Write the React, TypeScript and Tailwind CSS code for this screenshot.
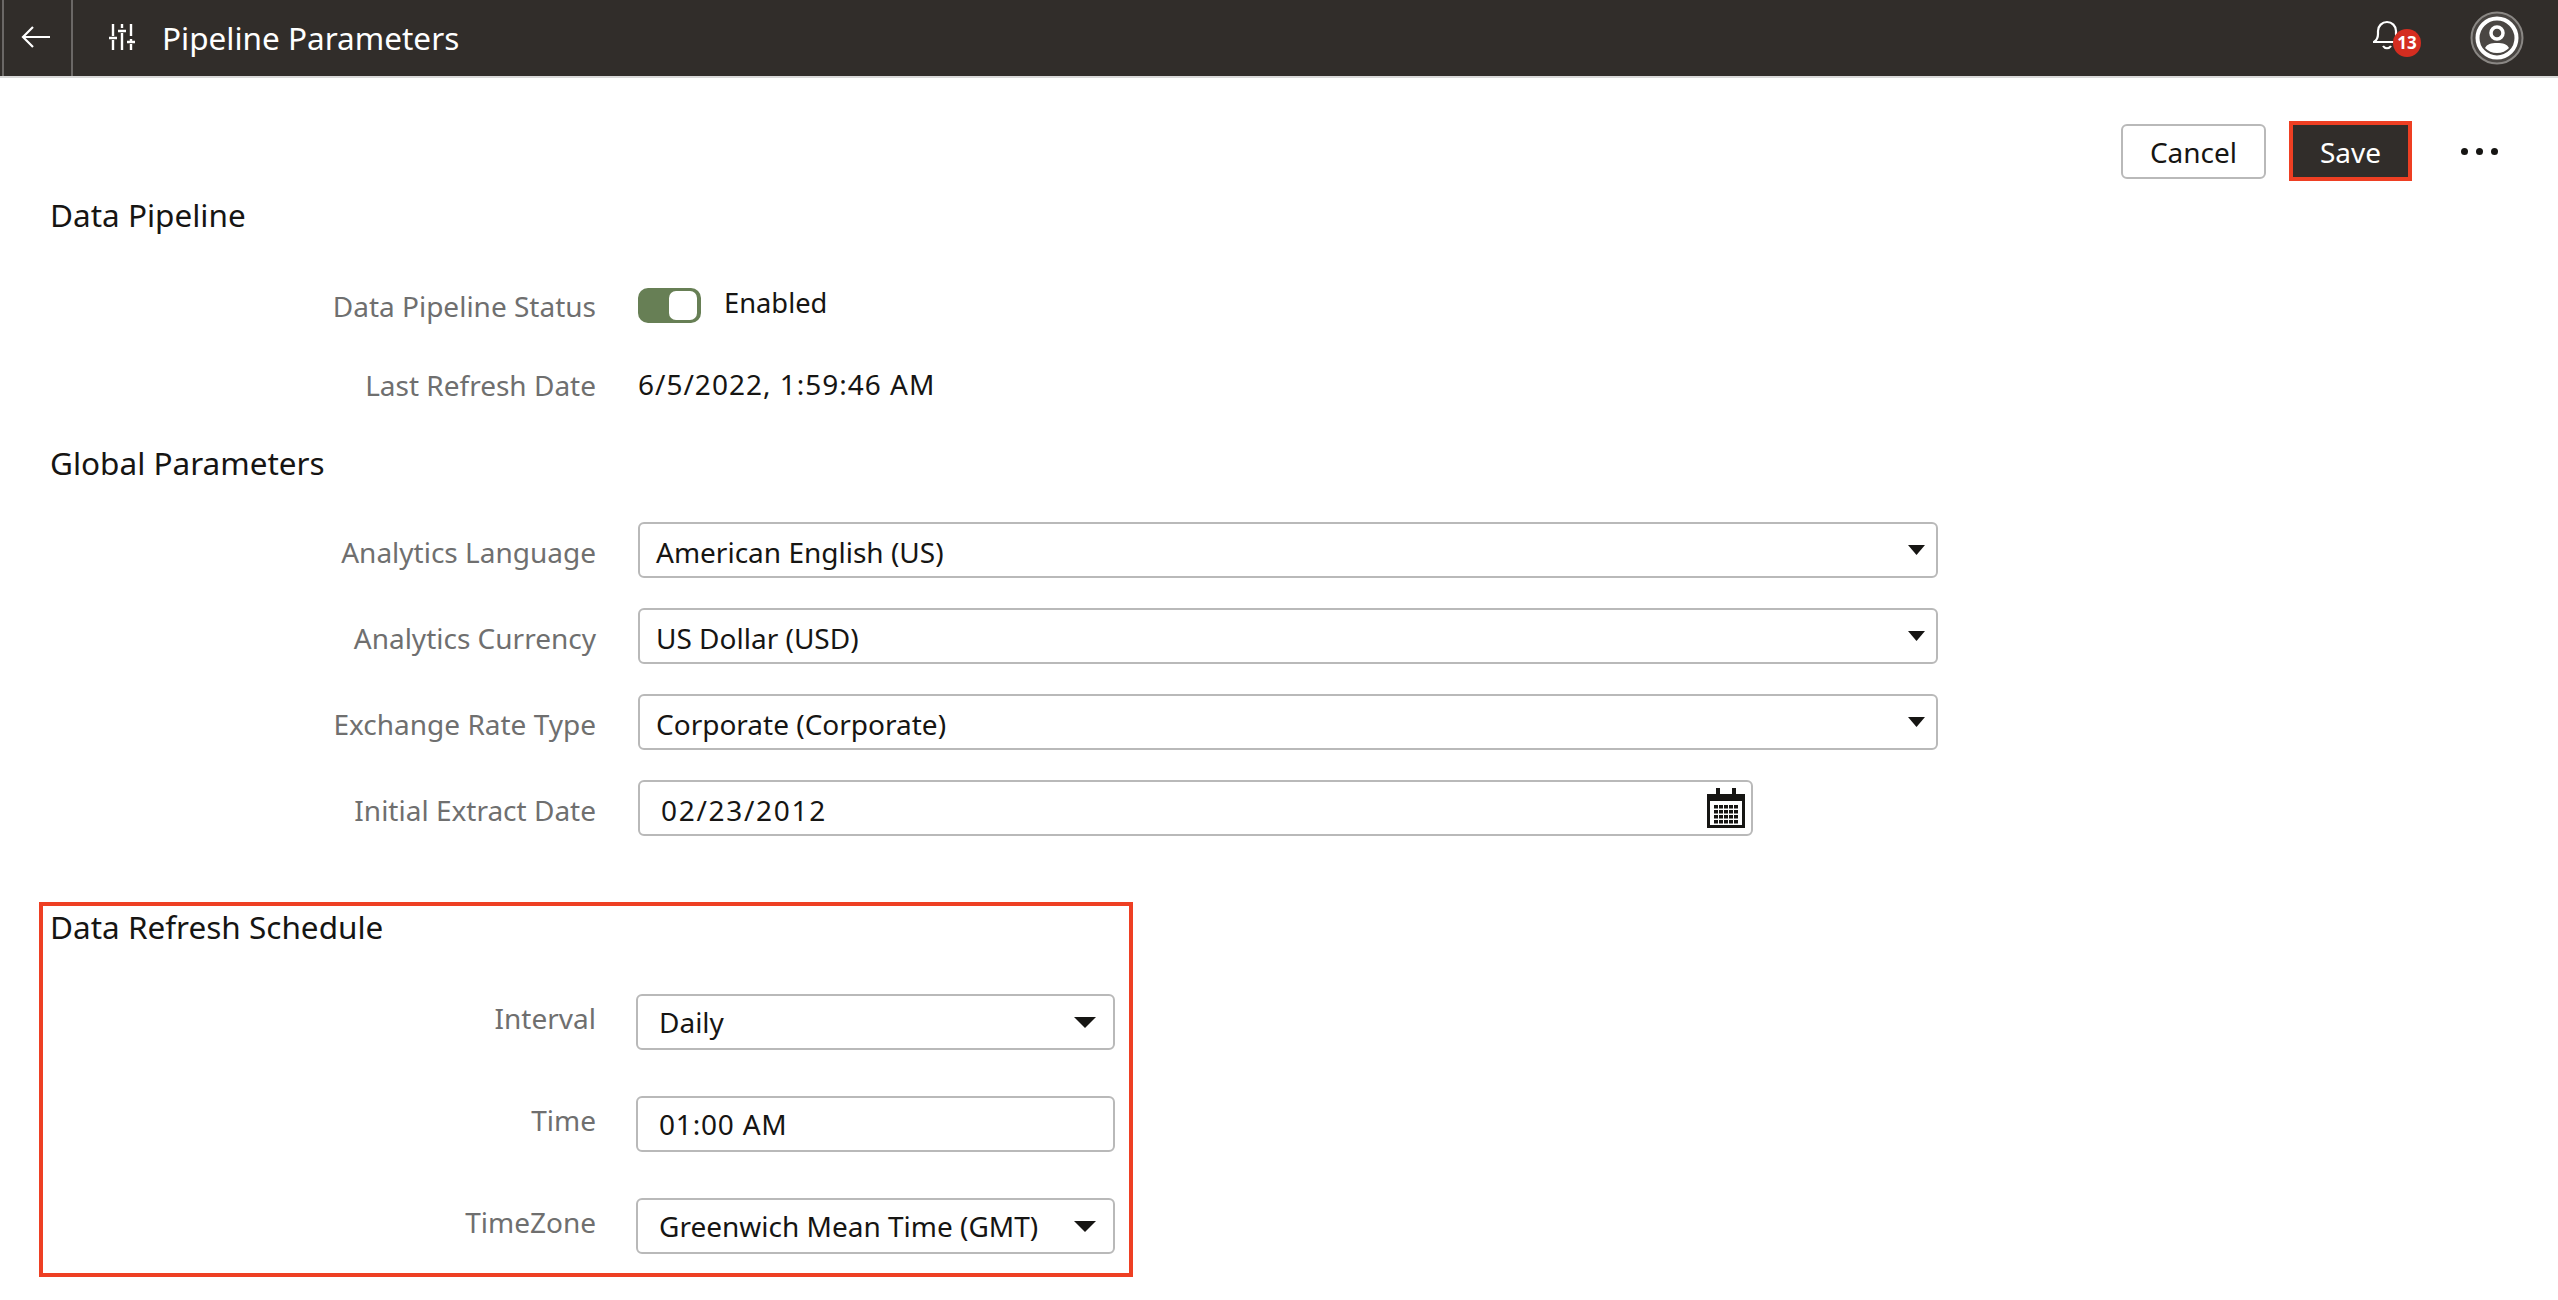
const ArrowIcon = () => (
  <svg width="30" height="24" viewBox="0 0 30 24" fill="none" stroke="#fff" strokeWidth="2.2">
    <path d="M29 12H2M12 2 2 12l10 10" />
  </svg>
);

const BellIcon = () => (
  <svg width="28" height="30" viewBox="0 0 28 30" fill="none" stroke="#fff" strokeWidth="2.2">
    <path d="M1 22c3-2 4-4 4-8V11a9 9 0 0 1 18 0v3c0 4 1 6 4 8z" />
    <path d="M10 26c2 3 6 3 8 0" />
  </svg>
);

const SlidersIcon = () => (
  <svg width="28" height="28" viewBox="0 0 28 28" fill="none" stroke="#fff" strokeWidth="2.4">
    <path d="M5 0v12M5 16v10M1 14h8" />
    <path d="M14 0v4M14 9v17M10 7h8" />
    <path d="M23 0v12M23 20v6M19 18h8M23 15v3" />
  </svg>
);

const Avatar = () => (
  <svg width="54" height="54" viewBox="0 0 54 54" fill="none">
    <circle cx="27" cy="27" r="25.5" fill="#4a4643" stroke="#8a8784" strokeWidth="2" />
    <circle cx="27" cy="27" r="19.5" stroke="#fff" strokeWidth="4" />
    <circle cx="27" cy="22" r="6" stroke="#fff" strokeWidth="3.5" />
    <path d="M15 37c2-4 6-5 12-5s10 1 12 5c-3 3-7 5-12 5s-9-2-12-5z" fill="#fff" />
  </svg>
);

const CalendarIcon = () => (
  <svg width="40" height="40" viewBox="0 0 40 40">
    <path d="M1 6h38v34H1z M4 13v24h32V13z" fill="#161513" fillRule="evenodd" />
    <rect x="10" y="0" width="4" height="10" fill="#161513" />
    <rect x="26" y="0" width="4" height="10" fill="#161513" />
    {[17, 22, 27, 32].map((y) =>
      [8, 13, 18, 23, 28].map((x) => (
        <rect key={`${x}-${y}`} x={x} y={y} width="4" height="3.5" fill="#161513" />
      ))
    )}
  </svg>
);

const Caret = ({ big }: { big?: boolean }) => (
  <svg width={big ? 22 : 17} height={big ? 11 : 10} viewBox="0 0 20 10" preserveAspectRatio="none">
    <path d="M0 0h20L10 10z" fill="#161513" />
  </svg>
);

const Heading = ({ children, className }: { children: string; className: string }) => (
  <h2 className={`flex h-10 items-center pl-[50px] text-[31.5px] leading-none font-normal text-[#161513] ${className}`}>
    {children}
  </h2>
);

const Row = ({
  label,
  children,
  className,
  labelClass = '',
}: {
  label: string;
  children: React.ReactNode;
  className: string;
  labelClass?: string;
}) => (
  <div className={`flex items-center ${className}`}>
    <div className={`w-[596px] shrink-0 text-right text-[28px] text-[#6f6f6f] ${labelClass}`}>{label}</div>
    {children}
  </div>
);

const Field = ({ value }: { value: string }) => (
  <div className="ml-[42px] flex h-14 w-[1300px] items-center justify-between rounded-[6px] border-2 border-[#b9b9b9] bg-white pr-[11px] pl-[16px] text-[28px] text-[#161513]">
    <span className="pt-[4px]">{value}</span>
    <Caret />
  </div>
);

const ScheduleField = ({ value, caret, className = '' }: { value: string; caret?: boolean; className?: string }) => (
  <div className="ml-[40px] flex h-14 w-[479px] items-center justify-between rounded-[6px] border-2 border-[#b9b9b9] pr-[17px] pl-[21px] text-[28px] text-[#161513]">
    <span className={className}>{value}</span>
    {caret && <Caret big />}
  </div>
);

export default function App() {
  return (
    <div className="h-[1300px] w-[2558px] overflow-hidden bg-white font-['Noto_Sans',sans-serif]">
      <header className="flex h-[78px] items-center border-b-2 border-[#d9d9d9] bg-[#312d2a] text-white">
        <div className="ml-[2px] flex h-full w-[71px] items-center justify-center border-x-2 border-[#6b6866] pr-[3px] pb-[3px]">
          <ArrowIcon />
        </div>
        <div className="ml-[35px] flex h-7 items-center">
          <SlidersIcon />
        </div>
        <h1 className="ml-[26px] text-[31.5px] leading-none font-normal">Pipeline Parameters</h1>
        <div className="ml-auto mr-[34px] flex items-center">
          <div className="relative mr-[61px] h-9 w-9">
            <BellIcon />
            <span className="absolute top-[9px] left-[20px] flex h-7 w-7 items-center justify-center rounded-full bg-[#d42d20] text-[17px] font-bold">
              13
            </span>
          </div>
          <Avatar />
        </div>
      </header>

      <div className="mt-[43px] flex h-[60px] items-center justify-end pr-[60px]">
        <button className="h-[55px] w-[145px] rounded-[6px] border-2 border-[#b9b9b9] pt-[2px] text-[28px] text-[#161513]">Cancel</button>
        <button className="ml-[23px] h-[60px] w-[123px] border-4 border-[#ee3f23] bg-[#312d2a] pt-[2px] text-[28px] text-white">Save</button>
        <div className="ml-[49px] flex gap-[8px]">
          <span className="h-[7px] w-[7px] rounded-full bg-[#161513]" />
          <span className="h-[7px] w-[7px] rounded-full bg-[#161513]" />
          <span className="h-[7px] w-[7px] rounded-full bg-[#161513]" />
        </div>
      </div>

      <Heading className="mt-[14px]">Data Pipeline</Heading>
      <Row label="Data Pipeline Status" className="mt-[52px] h-9" labelClass="pt-[2px]">
        <div className="ml-[42px] flex h-[35px] w-[63px] items-center justify-end rounded-[10px] bg-[#677f55] pr-[4px]">
          <div className="h-[29px] w-[28px] rounded-[7px] bg-white" />
        </div>
        <span className="ml-[23px] -mt-[3px] text-[27.3px] text-[#161513]">Enabled</span>
      </Row>
      <Row label="Last Refresh Date" className="mt-[44px] h-9">
        <span className="ml-[42px] -mt-[2px] text-[28px] tracking-[1px] text-[#161513]">6/5/2022, 1:59:46 AM</span>
      </Row>

      <Heading className="mt-[40px]">Global Parameters</Heading>
      <Row label="Analytics Language" className="mt-[39px]" labelClass="pt-[4px]">
        <Field value="American English (US)" />
      </Row>
      <Row label="Analytics Currency" className="mt-[30px]" labelClass="pt-[4px]">
        <Field value="US Dollar (USD)" />
      </Row>
      <Row label="Exchange Rate Type" className="mt-[30px]" labelClass="pt-[4px]">
        <Field value="Corporate (Corporate)" />
      </Row>
      <Row label="Initial Extract Date" className="mt-[30px]" labelClass="pt-[4px]">
        <div className="ml-[42px] flex h-14 w-[1115px] items-center justify-between rounded-[6px] border-2 border-[#b9b9b9] pr-[5px] pl-[21px] text-[28px] text-[#161513]">
          <span className="pt-[3px] tracking-[1.7px]">02/23/2012</span>
          <CalendarIcon />
        </div>
      </Row>

      <section className="mt-[66px] ml-[39px] h-[375px] w-[1094px] border-4 border-[#ee3f23] pt-[1px]">
        <div className="-ml-[43px]">
          <Heading className="">Data Refresh Schedule</Heading>
          <Row label="Interval" className="mt-[47px]" labelClass="-mt-[8px]">
            <ScheduleField value="Daily" caret />
          </Row>
          <Row label="Time" className="mt-[46px]" labelClass="-mt-[8px]">
            <ScheduleField value="01:00 AM" className="tracking-[0.8px]" />
          </Row>
          <Row label="TimeZone" className="mt-[46px]" labelClass="-mt-[8px]">
            <ScheduleField value="Greenwich Mean Time (GMT)" caret />
          </Row>
        </div>
      </section>
    </div>
  );
}
